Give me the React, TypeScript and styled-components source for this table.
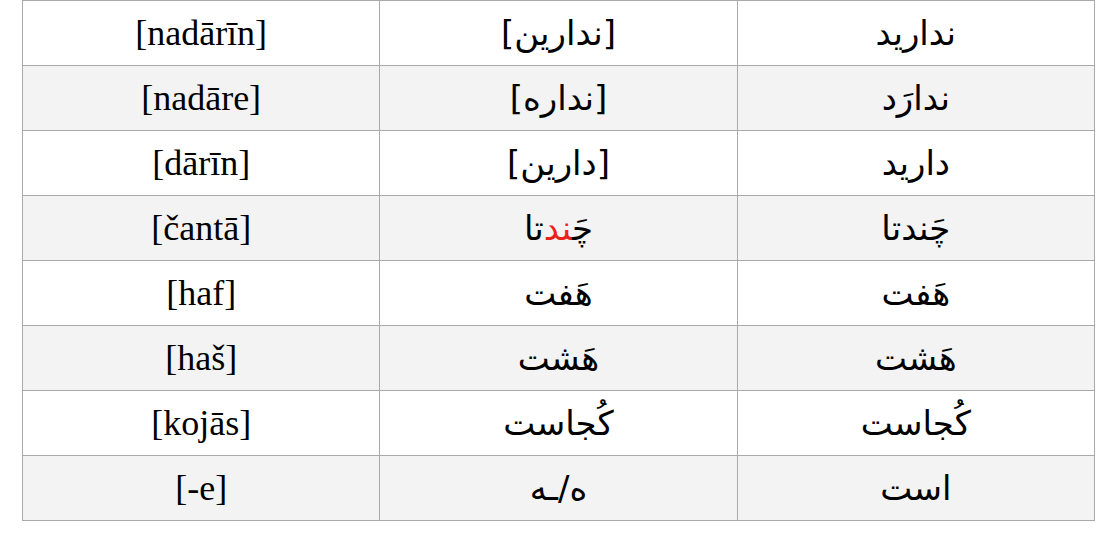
import React from "react";
import styled, { createGlobalStyle } from "styled-components";

const Global = createGlobalStyle`
  html, body {
    margin: 0;
    padding: 0;
    background: #ffffff;
  }
`;

const Page = styled.div`
  padding: 0 0 0 22px;
`;

const Table = styled.table`
  border-collapse: collapse;
  table-layout: fixed;
  width: 1073px;
`;

const Row = styled.tr<{ $shaded?: boolean }>`
  height: 65px;
  background: ${(p) => (p.$shaded ? "#f3f3f3" : "#ffffff")};
`;

const Cell = styled.td<{ $latin?: boolean }>`
  border: 1px solid #a9a9a9;
  padding: 0;
  text-align: center;
  vertical-align: middle;
  line-height: 1;
  color: #000;
  font-family: ${(p) =>
    p.$latin ? '"Liberation Serif", serif' : '"DejaVu Sans", sans-serif'};
  font-size: ${(p) => (p.$latin ? "36px" : "34px")};
  direction: ${(p) => (p.$latin ? "ltr" : "rtl")};
`;

const Red = styled.span`
  color: #e8231b;
`;

type Entry = {
  latin: string;
  middle: React.ReactNode;
  persian: string;
};

const rows: Entry[] = [
  { latin: "[nadārīn]", middle: "[ندارين]", persian: "نداريد" },
  { latin: "[nadāre]", middle: "[نداره]", persian: "ندارَد" },
  { latin: "[dārīn]", middle: "[دارين]", persian: "داريد" },
  {
    latin: "[čantā]",
    middle: (
      <>
        چَ<Red>ند</Red>تا
      </>
    ),
    persian: "چَندتا",
  },
  { latin: "[haf]", middle: "هَفت", persian: "هَفت" },
  { latin: "[haš]", middle: "هَشت", persian: "هَشت" },
  { latin: "[kojās]", middle: "كُجاست", persian: "كُجاست" },
  { latin: "[-e]", middle: "ه/ـه", persian: "است" },
];

const App = () => {
  return (
    <Page>
      <Global />
      <Table>
        <tbody>
          {rows.map((r, i) => (
            <Row key={i} $shaded={i % 2 === 1}>
              <Cell $latin>{r.latin}</Cell>
              <Cell>{r.middle}</Cell>
              <Cell>{r.persian}</Cell>
            </Row>
          ))}
        </tbody>
      </Table>
    </Page>
  );
};

export default App;
